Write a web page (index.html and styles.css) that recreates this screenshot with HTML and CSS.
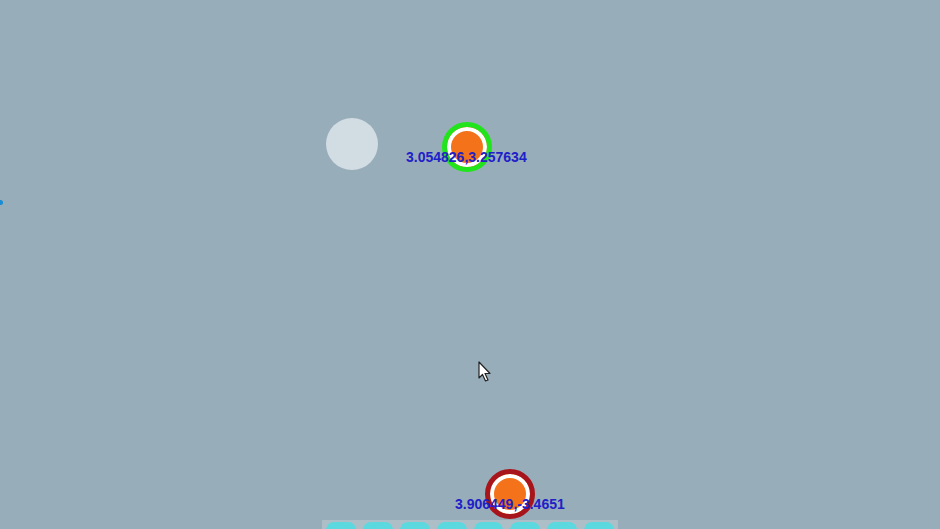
FILE: index.html
```html
<!DOCTYPE html>
<html lang="en">
  <head>
	<meta charset="UTF-8" />
	<meta name="viewport" content="width=device-width, initial-scale=1.0" />
	<title>Map</title>
	<link rel="stylesheet" href="styles.css">
  </head>
  <body>
	<div class="map">
	  <div class="dot"></div>
	  <div class="ghost"></div>

	  <div class="marker marker-start"></div>
	  <div class="coords coords-start">3.054826,3.257634</div>

	  <div class="marker marker-end"></div>
	  <div class="coords coords-end">3.906449,-3.4651</div>

	  <svg class="cursor" width="14" height="22" viewBox="0 0 14 22">
		<path d="M1 1 L1 17 L4.5 13.5 L7.5 20 L10 19 L7 12.5 L12 12.5 Z" fill="#fff" stroke="#222" stroke-width="1.2" stroke-linejoin="round"/>
	  </svg>

	  <div class="toolbar">
		<div class="tool"></div>
		<div class="tool"></div>
		<div class="tool"></div>
		<div class="tool"></div>
		<div class="tool"></div>
		<div class="tool"></div>
		<div class="tool"></div>
		<div class="tool"></div>
	  </div>
	</div>
  </body>
</html>
```

FILE: styles.css
```css
* {
  box-sizing: border-box;
  margin: 0;
  padding: 0;
}
body {
  font-family: "Liberation Sans", Arial, sans-serif;
  background: #98adba;
  overflow: hidden;
}
.map {
  position: relative;
  width: 940px;
  height: 529px;
}
.dot {
  position: absolute;
  left: -2px;
  top: 200px;
  width: 5px;
  height: 5px;
  border-radius: 50%;
  background: #1a8cd0;
}
.ghost {
  position: absolute;
  left: 326px;
  top: 118px;
  width: 52px;
  height: 52px;
  border-radius: 50%;
  background: #d2dce3;
}
.marker {
  position: absolute;
  width: 50px;
  height: 50px;
  border-radius: 50%;
  border: 5px solid;
  background: #f4721a;
  box-shadow: inset 0 0 0 4px #fff;
}
.marker-start {
  left: 442px;
  top: 122px;
  border-color: #22e41c;
}
.marker-end {
  left: 485px;
  top: 469px;
  border-color: #a8141c;
}
.coords {
  position: absolute;
  font-size: 14px;
  font-weight: bold;
  line-height: 14px;
  color: #2020c8;
  white-space: nowrap;
}
.coords-start {
  left: 406px;
  top: 150px;
}
.coords-end {
  left: 455px;
  top: 497px;
}
.cursor {
  position: absolute;
  left: 478px;
  top: 361px;
}
.toolbar {
  position: absolute;
  left: 322px;
  top: 520px;
  width: 296px;
  height: 20px;
  padding: 2px 4px 0;
  background: #adbec7;
  display: flex;
  gap: 7px;
}
.tool {
  width: 30px;
  height: 20px;
  border-radius: 8px 8px 0 0;
  background: #5cd8df;
}
```
